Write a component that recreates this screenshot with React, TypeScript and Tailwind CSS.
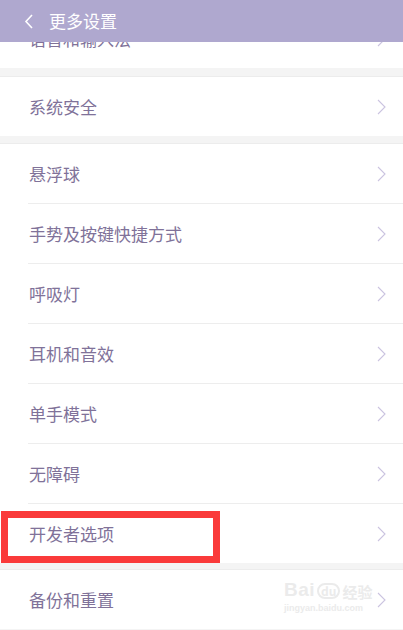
import React from "react";

const groupTop = ["系统安全"];
const groupMid = ["悬浮球", "手势及按键快捷方式", "呼吸灯", "耳机和音效", "单手模式", "无障碍", "开发者选项"];

const Chevron = () => (
  <svg width="9" height="16" viewBox="0 0 9 16" className="shrink-0">
    <path d="M1 1 L8 8 L1 15" fill="none" stroke="#cbc4e0" strokeWidth="1.1" />
  </svg>
);

const Row = ({ label, divider }: { label: string; divider?: boolean }) => (
  <div className="bg-white">
    <div className="flex h-[59px] items-center justify-between pl-[29px] pr-[17px]">
      <span className="text-[17px] text-[#807299]">{label}</span>
      <Chevron />
    </div>
    {divider && <div className="ml-[28px] h-px bg-[#ededed]" />}
  </div>
);

const App = () => {
  return (
    <div
      className="relative h-[630px] w-[403px] overflow-hidden bg-[#f4f4f4]"
      style={{ fontFamily: '"Noto Sans CJK SC", "Noto Sans", sans-serif' }}
    >
      {/* scrolled content */}
      <div className="flex flex-col">
        <div className="bg-white pt-[9px]">
          <Row label="语音和输入法" />
        </div>
        <div className="h-[9px] border-b border-[#ececec]" />
        {groupTop.map((l) => (
          <Row key={l} label={l} />
        ))}
        <div className="h-[8px] border-b border-[#ececec]" />
        {groupMid.map((l, i) => (
          <Row key={l} label={l} divider={i < groupMid.length - 1} />
        ))}
        <div className="h-[7px] border-b border-[#ececec]" />
        <Row label="备份和重置" />
      </div>

      {/* header */}
      <div className="absolute inset-x-0 top-0 flex h-[42px] items-center gap-[15px] bg-[#afa8cf] pl-[24px]">
        <svg width="10" height="15" viewBox="0 0 10 15">
          <path d="M8 1 L2 7.5 L8 14" fill="none" stroke="#ffffff" strokeWidth="1.6" />
        </svg>
        <span className="text-[17px] text-white">更多设置</span>
      </div>

      {/* highlight box */}
      <div className="absolute left-[1px] top-[511px] h-[52px] w-[219px] border-[7px] border-[#fa3a3a]" />

      {/* watermark */}
      <div className="pointer-events-none absolute left-[284px] top-[580px] flex flex-col items-start leading-none text-[#ebebeb]">
        <div className="flex items-end gap-[2px]">
          <span className="text-[19px] font-bold tracking-wide" style={{ fontFamily: '"Liberation Sans", sans-serif' }}>
            Bai
          </span>
          <span className="rounded-full border-2 border-[#ebebeb] px-[2px] text-[12px] font-bold">du</span>
          <span className="text-[15px] font-bold">经验</span>
        </div>
        <span className="mt-[5px] text-[9px] font-bold" style={{ fontFamily: '"Liberation Sans", sans-serif' }}>
          jingyan.baidu.com
        </span>
      </div>
    </div>
  );
};

export default App;
